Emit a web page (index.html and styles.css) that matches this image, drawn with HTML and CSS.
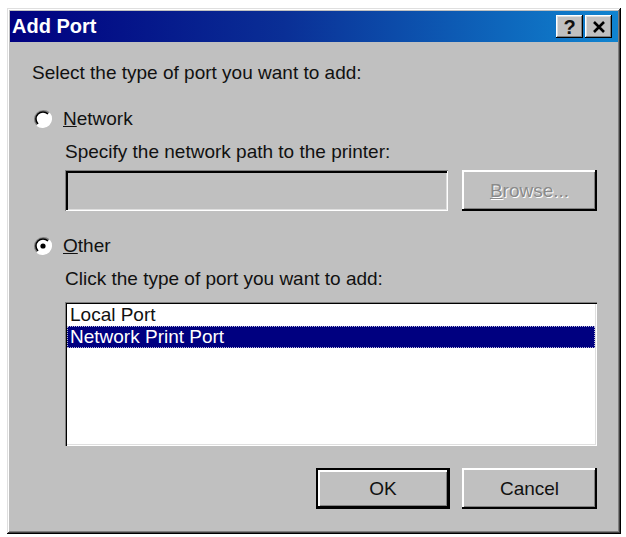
FILE: index.html
```html
<!DOCTYPE html>
<html>
<head>
<meta charset="utf-8">
<title>Add Port</title>
<link rel="stylesheet" href="styles.css">
</head>
<body>
<div class="window">
  <div class="titlebar">
    <span class="title">Add Port</span>
    <div class="tbtns">
      <span class="tbtn help">?</span>
      <span class="tbtn close">
        <svg width="14" height="12" viewBox="0 0 14 12"><path d="M2 1 L12 11 M12 1 L2 11" stroke="#000" stroke-width="2.6" fill="none"/></svg>
      </span>
    </div>
  </div>
  <div class="content">
    <div class="lbl">Select the type of port you want to add:</div>

    <div class="radio-row r-network">
      <svg class="radio" width="20" height="20" viewBox="0 0 20 20">
        <circle cx="10" cy="10" r="8.5" fill="#fff"/>
        <path d="M4 16 A8.5 8.5 0 0 1 16 4" stroke="#808080" stroke-width="1.8" fill="none"/>
        <path d="M5 15 A7 7 0 0 1 15 5" stroke="#000" stroke-width="1.6" fill="none"/>
        <path d="M4 16 A8.5 8.5 0 0 0 16 4" stroke="#fff" stroke-width="1.8" fill="none"/>
      </svg>
      <span class="rlabel"><u>N</u>etwork</span>
    </div>

    <div class="indent">
      <div class="lbl l-specify">Specify the network path to the printer:</div>
      <div class="input-row">
        <div class="field"></div>
        <div class="btn disabled"><span><u>B</u>rowse...</span></div>
      </div>
    </div>

    <div class="radio-row r-other">
      <svg class="radio" width="20" height="20" viewBox="0 0 20 20">
        <circle cx="10" cy="10" r="8.5" fill="#fff"/>
        <path d="M4 16 A8.5 8.5 0 0 1 16 4" stroke="#808080" stroke-width="1.8" fill="none"/>
        <path d="M5 15 A7 7 0 0 1 15 5" stroke="#000" stroke-width="1.6" fill="none"/>
        <path d="M4 16 A8.5 8.5 0 0 0 16 4" stroke="#fff" stroke-width="1.8" fill="none"/>
        <circle cx="10" cy="10" r="2.6" fill="#000"/>
      </svg>
      <span class="rlabel"><u>O</u>ther</span>
    </div>

    <div class="indent">
      <div class="lbl l-click">Click the type of port you want to add:</div>
      <div class="listbox">
        <div class="item">Local Port</div>
        <div class="item selected">Network Print Port</div>
      </div>
    </div>

    <div class="footer">
      <div class="default-frame"><div class="btn">OK</div></div>
      <div class="btn">Cancel</div>
    </div>
  </div>
</div>
</body>
</html>
```

FILE: styles.css
```css
html, body {
  margin: 0;
  padding: 0;
  background: #ffffff;
}

body {
  font-family: "Liberation Sans", Arial, sans-serif;
  font-size: 19px;
  color: #111;
}

.window {
  margin: 8px 0 0 7px;
  width: 614px;
  height: 526px;
  box-sizing: border-box;
  background: #c0c0c0;
  padding: 3px;
  box-shadow: inset -1px -1px #000, inset 1px 1px #dfdfdf, inset -2px -2px #404040, inset 2px 2px #fff, inset -3px -3px #808080;
  display: flex;
  flex-direction: column;
}

.titlebar {
  height: 31px;
  background: linear-gradient(to right, #000080 0%, #0a2f96 45%, #1084d0 100%);
  display: flex;
  align-items: center;
  justify-content: space-between;
  padding: 0 6px 0 2px;
}

.title {
  color: #fff;
  font-weight: bold;
  font-size: 20px;
  line-height: 31px;
}

.tbtns {
  display: flex;
  gap: 2px;
}

.tbtn {
  width: 27px;
  height: 23px;
  box-sizing: border-box;
  background: #c0c0c0;
  box-shadow: inset -1px -1px #000, inset 1px 1px #fff, inset -2px -2px #808080, inset 2px 2px #dfdfdf;
  display: flex;
  align-items: center;
  justify-content: center;
  font-weight: bold;
  font-size: 20px;
  line-height: 23px;
}

.help {
  padding-top: 1px;
}

.content {
  flex: 1;
  padding: 20px 21px 0 22px;
  display: flex;
  flex-direction: column;
}

.lbl {
  line-height: 22px;
  white-space: nowrap;
}

.radio-row {
  display: flex;
  align-items: center;
  height: 22px;
  line-height: 22px;
}

.radio {
  margin-left: 1px;
  margin-right: 10px;
  flex: none;
}

.r-network {
  margin-top: 24px;
}

.r-other {
  margin-top: 24px;
}

.indent {
  margin-left: 33px;
  display: flex;
  flex-direction: column;
}

.l-specify {
  margin-top: 11px;
}

.l-click {
  margin-top: 11px;
}

.input-row {
  margin-top: 7px;
  display: flex;
  gap: 14px;
}

.field {
  width: 383px;
  height: 41px;
  box-sizing: border-box;
  background: #c0c0c0;
  box-shadow: inset 1px 1px #808080, inset -1px -1px #fff, inset 3px 3px #000, inset -2px -2px #dfdfdf;
}

.btn {
  width: 135px;
  height: 41px;
  box-sizing: border-box;
  background: #c0c0c0;
  box-shadow: inset -2px -2px #000, inset 2px 2px #fff, inset -3px -3px #808080;
  display: flex;
  align-items: center;
  justify-content: center;
  line-height: 22px;
}

.btn.disabled span {
  color: #8a8a8a;
  text-shadow: 1px 1px #fff;
}

.listbox {
  margin-top: 12px;
  width: 532px;
  height: 144px;
  box-sizing: border-box;
  background: #fff;
  padding: 2px;
  box-shadow: inset 1px 1px #808080, inset 2px 2px #000, inset -1px -1px #fff, inset -2px -2px #dfdfdf;
}

.item {
  height: 22px;
  box-sizing: border-box;
  line-height: 20px;
  padding: 0 2px;
  border: 1px solid transparent;
  white-space: nowrap;
}

.item.selected {
  background: #000080;
  color: #fff;
  border: 1px dotted #b8b8d8;
}

.footer {
  margin-top: 22px;
  display: flex;
  justify-content: flex-end;
  gap: 12px;
}

.default-frame {
  background: #000;
  padding: 2px;
  width: 134px;
  height: 41px;
  box-sizing: border-box;
  display: flex;
}

.default-frame .btn {
  width: 100%;
  height: 100%;
  box-shadow: inset -1px -1px #000, inset 2px 2px #fff, inset -2px -2px #808080;
}
```
